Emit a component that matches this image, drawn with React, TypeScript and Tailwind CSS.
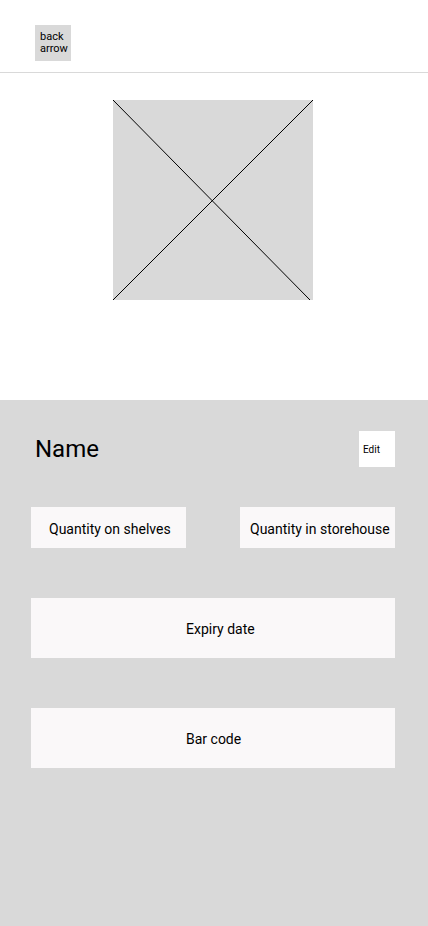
export default function App() {
  return (
    <div className="min-h-[926px] w-full bg-white font-['Roboto',sans-serif] text-black flex flex-col">
      {/* header */}
      <div className="h-[73px] border-b border-[#d9d9d9] pt-[25px] pl-[35px]">
        <button className="w-[36px] h-[36px] bg-[#d9d9d9] text-left pl-[5px] text-[11px] leading-[12px]">
          back
          <br />
          arrow
        </button>
      </div>

      {/* image placeholder */}
      <div className="h-[327px] pt-[27px] pl-[113px]">
        <div className="w-[200px] h-[200px] bg-[#d9d9d9]">
          <svg width="200" height="200" viewBox="0 0 200 200">
            <line x1="0" y1="0" x2="197" y2="200" stroke="#000" strokeWidth="1" />
            <line x1="200" y1="0" x2="0" y2="200" stroke="#000" strokeWidth="1" />
          </svg>
        </div>
      </div>

      {/* details panel */}
      <div className="flex-1 bg-[#d9d9d9] pl-[31px] pr-[33px] pt-[31px] pb-[40px]">
        <div className="flex items-center justify-between h-[36px] pl-[4px]">
          <h1 className="text-[24px] leading-none">Name</h1>
          <button className="w-[36px] h-[36px] bg-white text-[10px] text-left pl-[4px]">Edit</button>
        </div>

        <div className="flex justify-between mt-[40px]">
          <div className="w-[155px] h-[41px] bg-[#faf8f9] flex items-center pl-[18px] pt-[3px] text-[14px]">
            Quantity on shelves
          </div>
          <div className="w-[155px] h-[41px] bg-[#faf8f9] flex items-center pl-[10px] pt-[3px] text-[14px] whitespace-nowrap">
            Quantity in storehouse
          </div>
        </div>

        <div className="mt-[50px] h-[60px] bg-[#faf8f9] flex items-center pl-[155px] pt-[2px] text-[14px]">
          Expiry date
        </div>

        <div className="mt-[50px] h-[60px] bg-[#faf8f9] flex items-center pl-[155px] pt-[2px] text-[14px]">
          Bar code
        </div>
      </div>
    </div>
  );
}
